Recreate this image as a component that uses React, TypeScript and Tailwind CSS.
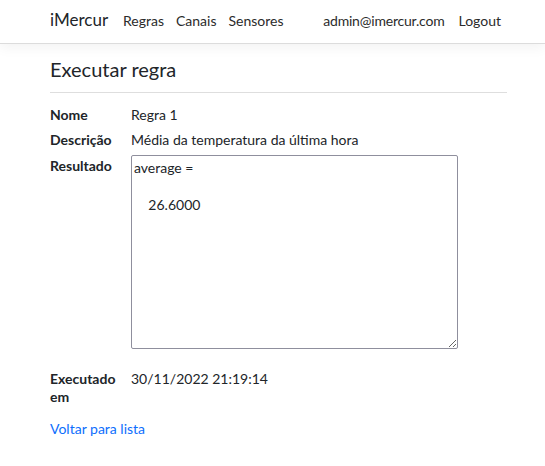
import React from 'react'

const font = { fontFamily: 'Lato, "Noto Sans", sans-serif' }

export default function App() {
  const rows: [string, React.ReactNode][] = [
    ['Nome', 'Regra 1'],
    ['Descrição', 'Média da temperatura da última hora'],
  ]
  return (
    <div className="min-h-screen w-full bg-white text-[#212529]" style={font}>
      <nav className="h-[44px] pb-[3px] border-b border-[#dcdcdc] bg-white shadow-[0_4px_12px_rgba(0,0,0,0.05)] flex items-center pl-[50px] pr-[44px]">
        <span className="text-[17px] w-[73px] text-[#212529]">iMercur</span>
        <div className="flex gap-[12px] text-[14px] text-[#2b2b2b]">
          <span>Regras</span>
          <span>Canais</span>
          <span>Sensores</span>
        </div>
        <div className="ml-auto flex gap-[14px] text-[14px] text-[#2b2b2b]">
          <span className="tracking-[-0.2px]">admin@imercur.com</span>
          <span>Logout</span>
        </div>
      </nav>

      <main className="pl-[50px] pr-[38px] pt-[10px] text-[14px]">
        <h1 className="text-[20px] leading-[30px] font-normal">Executar regra</h1>
        <hr className="mt-[8px] mb-[12px] border-t border-[#dedede]" />

        <dl>
          {rows.map(([k, v]) => (
            <div key={k} className="flex mb-[6px] leading-[19px]">
              <dt className="w-[81px] font-bold shrink-0">{k}</dt>
              <dd>{v}</dd>
            </div>
          ))}
          <div className="flex leading-[19px]">
            <dt className="w-[81px] font-bold shrink-0 pt-[1px]">Resultado</dt>
            <dd>
              <textarea
                readOnly
                className="block w-[327px] h-[194px] border border-[#8f8f9d] rounded-[2px] px-[2px] py-[3px] text-[14px] leading-[18.5px] outline-none"
                style={font}
                value={'average =\n\n    26.6000\n'}
              />
            </dd>
          </div>
          <div className="flex leading-[18px] mt-[21px]">
            <dt className="w-[81px] font-bold shrink-0">Executado<br />em</dt>
            <dd>30/11/2022 21:19:14</dd>
          </div>
        </dl>

        <a href="#" className="block mt-[12px] text-[#0d6efd]">Voltar para lista</a>
      </main>
    </div>
  )
}
